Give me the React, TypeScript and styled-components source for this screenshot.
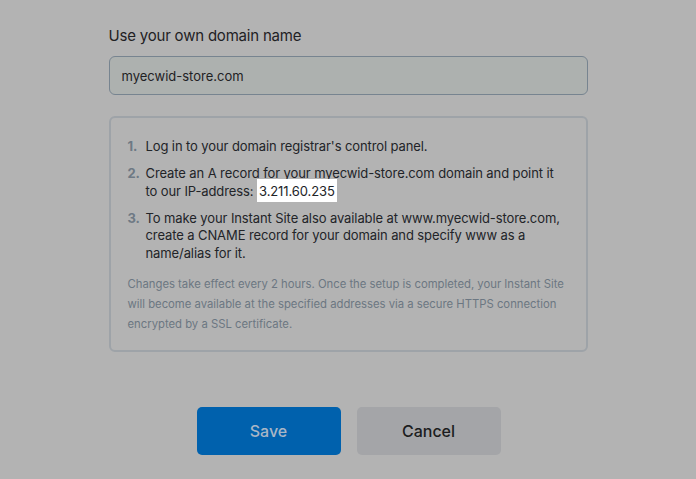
import styled, { createGlobalStyle } from "styled-components";

const GlobalStyle = createGlobalStyle`
  html, body {
    margin: 0;
    padding: 0;
    background-color: #b3b3b3;
  }
  body {
    font-family: Inter, "Noto Sans", "Liberation Sans", sans-serif;
    -webkit-font-smoothing: antialiased;
  }
`;

const Page = styled.div`
  width: 696px;
  height: 479px;
  display: flex;
  flex-direction: column;
  align-items: center;
  padding-top: 26px;
  box-sizing: border-box;
`;

const Form = styled.div`
  width: 479px;
  display: flex;
  flex-direction: column;
`;

const Label = styled.label`
  font-size: 15px;
  letter-spacing: -0.2px;
  color: #1f2124;
  line-height: 20px;
  margin-bottom: 10px;
`;

const Input = styled.div`
  height: 39px;
  box-sizing: border-box;
  border: 1px solid #778490;
  border-radius: 6px;
  background-color: #adb1af;
  padding: 0 12px;
  display: flex;
  align-items: center;
  font-size: 13px;
  color: #1f2124;
`;

const InfoBox = styled.div`
  margin-top: 21px;
  height: 236px;
  box-sizing: border-box;
  border: 2px solid #9ea3a8;
  border-radius: 6px;
  padding: 20px 20px 0 17px;
`;

const Steps = styled.ol`
  margin: 0;
  padding: 0;
  list-style: none;
  display: flex;
  flex-direction: column;
  gap: 9.5px;
`;

const Step = styled.li`
  display: flex;
  font-size: 13px;
  letter-spacing: -0.1px;
  line-height: 17.5px;
  color: #222428;
`;

const StepNumber = styled.span`
  width: 18px;
  flex-shrink: 0;
  font-weight: 700;
  color: #6e7984;
`;

const Highlight = styled.span`
  background-color: #ffffff;
  padding: 3.5px 2px;
`;

const Note = styled.p`
  margin: 12px 0 0 0;
  font-size: 11.3px;
  line-height: 20px;
  color: #6c7782;
`;

const Actions = styled.div`
  margin-top: 55px;
  margin-left: 1px;
  display: flex;
  gap: 16px;
`;

const Button = styled.button<{ $primary?: boolean }>`
  width: 144px;
  height: 48px;
  border: none;
  border-radius: 5px;
  font-family: inherit;
  font-size: 16px;
  font-weight: 500;
  background-color: ${(p) => (p.$primary ? "#0061ad" : "#a4a5a8")};
  color: ${(p) => (p.$primary ? "#a9b6c6" : "#1c1d20")};
  cursor: pointer;
`;

export default function App() {
  return (
    <>
      <GlobalStyle />
      <Page>
        <Form>
          <Label>Use your own domain name</Label>
          <Input>myecwid-store.com</Input>
          <InfoBox>
            <Steps>
              <Step>
                <StepNumber>1.</StepNumber>
                <span>Log in to your domain registrar's control panel.</span>
              </Step>
              <Step>
                <StepNumber>2.</StepNumber>
                <span>
                  Create an A record for your myecwid-store.com domain and point it
                  to our IP-address: <Highlight>3.211.60.235</Highlight>
                </span>
              </Step>
              <Step>
                <StepNumber>3.</StepNumber>
                <span>
                  To make your Instant Site also available at www.myecwid-store.com,
                  create a CNAME record for your domain and specify www as a
                  name/alias for it.
                </span>
              </Step>
            </Steps>
            <Note>
              Changes take effect every 2 hours. Once the setup is completed, your
              Instant Site will become available at the specified addresses via a
              secure HTTPS connection encrypted by a SSL certificate.
            </Note>
          </InfoBox>
        </Form>
        <Actions>
          <Button $primary>Save</Button>
          <Button>Cancel</Button>
        </Actions>
      </Page>
    </>
  );
}
